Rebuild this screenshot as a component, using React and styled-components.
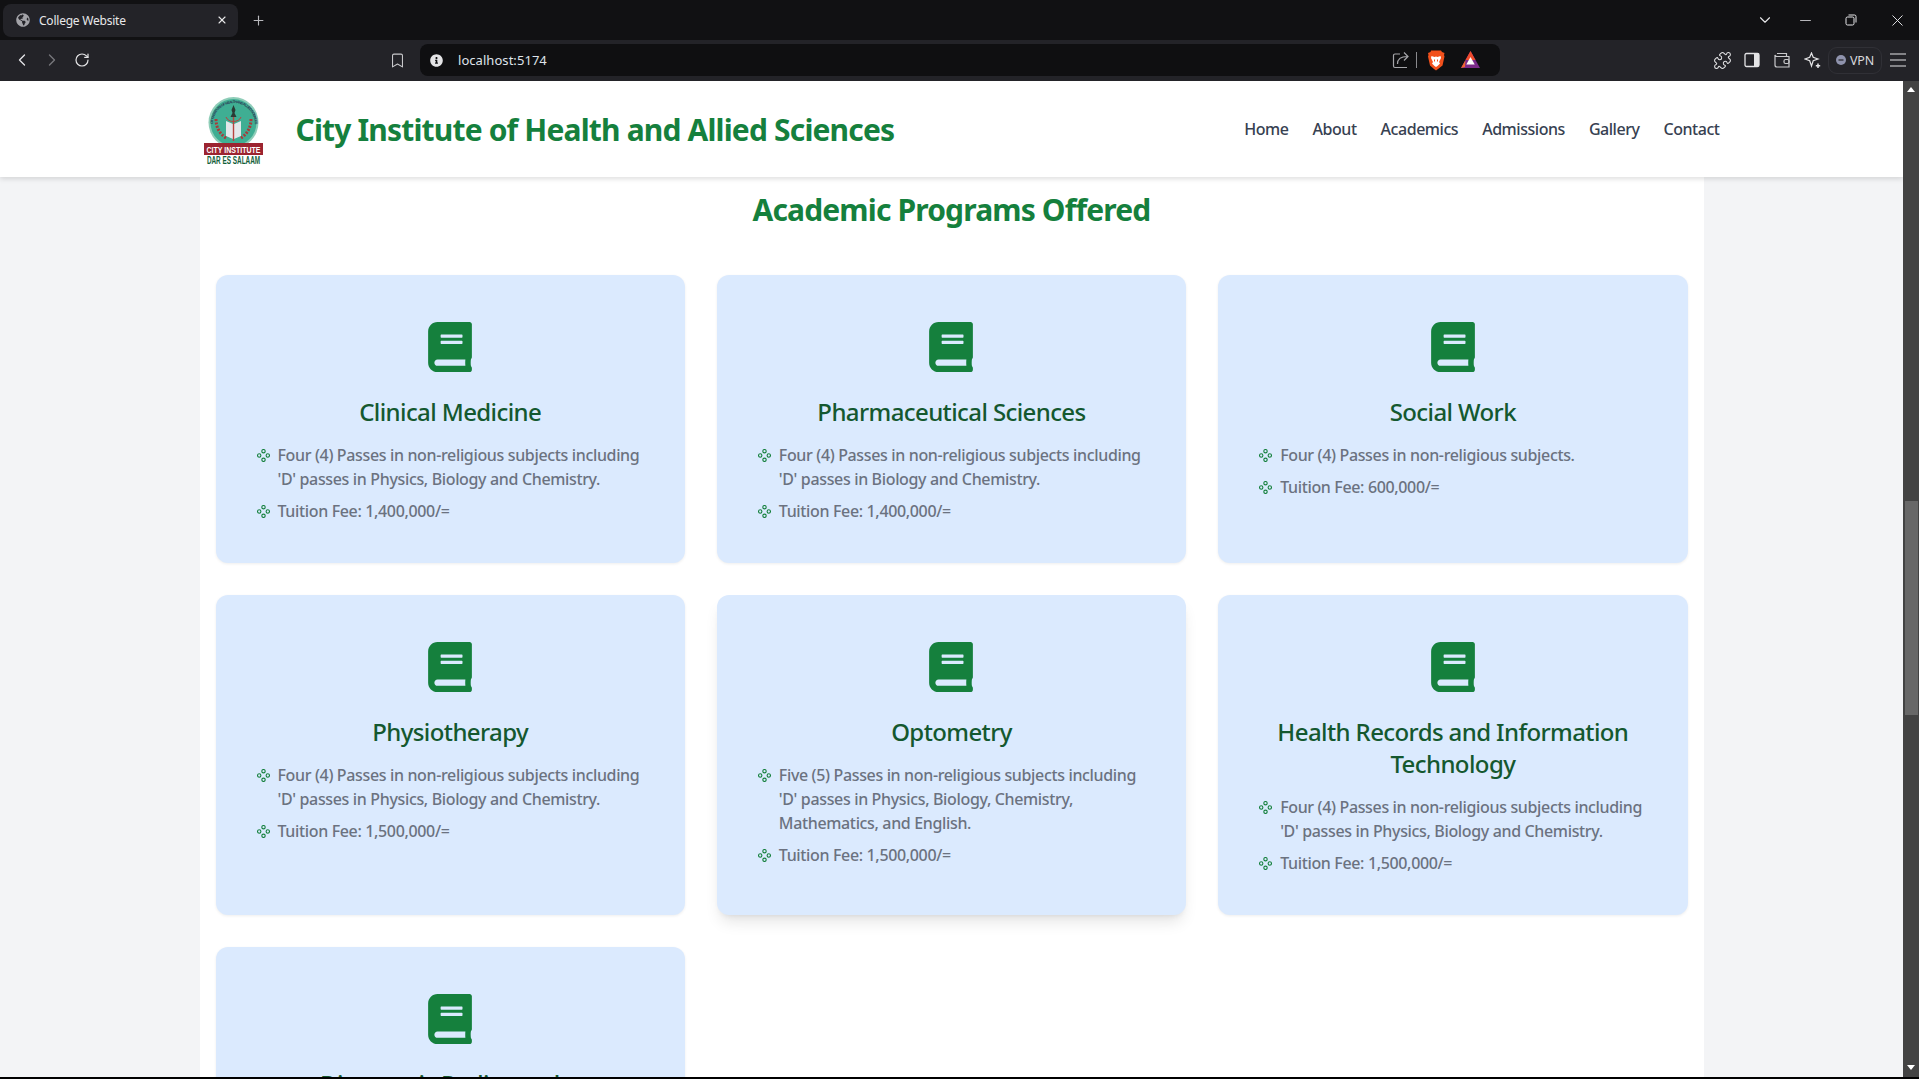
import styled, { createGlobalStyle } from 'styled-components';
import { ChevronLeft, ChevronRight, ChevronDown, RotateCw, Bookmark, X, Plus, Minus, Puzzle } from 'lucide-react';
import { FaBook, FaGlobeAmericas, FaInfoCircle } from 'react-icons/fa';

const FONT = '"Noto Sans", "Open Sans", sans-serif';

const GlobalStyle = createGlobalStyle`
  html, body {
    margin: 0;
    height: 100%;
    overflow: hidden;
    font-family: ${FONT};
  }
`;

const Screen = styled.div`
  display: flex;
  flex-direction: column;
  height: 1079px;
  background: #000;
`;

/* browser chrome */
const TabStrip = styled.div`
  display: flex;
  align-items: center;
  flex: 0 0 40px;
  background: #111113;
  color: #e6e6e8;
`;
const Tab = styled.div`
  display: flex;
  align-items: center;
  width: 235px;
  height: 33px;
  margin-left: 3px;
  padding: 0 10px 0 13px;
  box-sizing: border-box;
  border-radius: 8px;
  background: #232328;
  font-size: 12px;
  letter-spacing: -0.22px;
  color: #e8e8ea;
  svg { flex-shrink: 0; }
  span { flex: 1; margin-left: 9px; }
`;
const NewTab = styled.div`
  display: flex;
  margin-left: 13px;
  color: #b9b9bd;
`;
const WindowControls = styled.div`
  display: flex;
  align-items: center;
  margin-left: auto;
  margin-right: -1px;
  color: #e8e8ea;
`;
const WindowButton = styled.div`
  display: flex;
  align-items: center;
  justify-content: center;
  width: ${p => p.$width || 46}px;
  height: 30px;
`;
const Toolbar = styled.div`
  display: flex;
  align-items: center;
  flex: 0 0 41px;
  padding: 0 6px 1px 7px;
  box-sizing: border-box;
  background: #232328;
  color: #e4e4e6;
`;
const Slot = styled.div`
  display: flex;
  align-items: center;
  justify-content: center;
  width: 30px;
  height: 30px;
  color: ${p => (p.$dim ? '#77777c' : '#e4e4e6')};
`;
const BookmarkSlot = styled(Slot)`
  margin-left: 285px;
  color: #c9c9cc;
`;
const AddressBar = styled.div`
  display: flex;
  align-items: center;
  width: 1080px;
  height: 32px;
  margin-left: 8px;
  padding: 0 20px 0 10px;
  box-sizing: border-box;
  border-radius: 8px;
  background: #0f0f11;
  font-size: 13px;
  letter-spacing: 0.05px;
  color: #dfe3ea;
`;
const Url = styled.span`
  margin-left: 15px;
  flex: 1;
`;
const BarDivider = styled.div`
  width: 1px;
  height: 16px;
  margin: 0 10px 0 6px;
  background: #8a8a8e;
`;
const IconSpacer = styled.div`
  width: 16px;
`;
const Extensions = styled.div`
  display: flex;
  align-items: center;
  margin-left: auto;
`;
const VpnPill = styled.div`
  display: flex;
  align-items: center;
  gap: 4px;
  width: 54px;
  height: 27px;
  margin: 0 1px;
  padding-left: 7px;
  box-sizing: border-box;
  border: 1px solid #303036;
  border-radius: 9px;
  font-size: 12.5px;
  letter-spacing: -0.2px;
  color: #d8d8dc;
`;

/* viewport */
const Viewport = styled.div`
  display: flex;
  flex: 1;
  min-height: 0;
  margin-bottom: 2px;
`;
const Page = styled.div`
  flex: 1;
  min-width: 0;
  overflow: hidden;
  background: #f3f4f6;
`;
const Scrollbar = styled.div`
  position: relative;
  flex: 0 0 16px;
  background: #434343;
`;
const ScrollThumb = styled.div`
  position: absolute;
  left: 2px;
  right: 1px;
  top: 420px;
  height: 214px;
  background: #686868;
`;
const ScrollArrow = styled.div`
  position: absolute;
  left: 4px;
  ${p => (p.$down ? 'bottom: 7px;' : 'top: 6px;')}
  width: 0;
  height: 0;
  border-left: 4px solid transparent;
  border-right: 4px solid transparent;
  ${p => (p.$down ? 'border-top: 5px solid #fff;' : 'border-bottom: 5px solid #fff;')}
`;

/* site header */
const SiteHeader = styled.header`
  position: relative;
  z-index: 2;
  height: 96px;
  background: #fff;
  box-shadow: 0 2px 5px rgba(0, 0, 0, 0.13);
`;
const HeaderInner = styled.div`
  display: flex;
  align-items: center;
  height: 100%;
  width: 1536px;
  margin: 0 auto;
  padding-left: 20px;
  box-sizing: border-box;
`;
const LogoMark = styled.svg`
  flex-shrink: 0;
  margin-top: 3px;
`;
const SiteTitle = styled.h1`
  margin: 2px 0 0 32px;
  font-size: 30px;
  font-weight: 700;
  line-height: 36px;
  letter-spacing: -0.83px;
  color: #15803d;
`;
const Nav = styled.nav`
  display: flex;
  gap: 24px;
  margin-left: auto;
`;
const NavLink = styled.a`
  font-size: 16px;
  font-weight: 500;
  letter-spacing: -0.46px;
  color: #374151;
`;

/* programs */
const Main = styled.main`
  width: 1504px;
  margin: 0 auto;
  padding: 15px 16px 0;
  box-sizing: border-box;
  background: #fff;
`;
const SectionTitle = styled.h2`
  margin: 0 0 47px;
  text-align: center;
  font-size: 30px;
  font-weight: 700;
  line-height: 36px;
  letter-spacing: -0.85px;
  color: #15803d;
`;
const Grid = styled.div`
  display: grid;
  grid-template-columns: repeat(3, 1fr);
  gap: 32px;
`;
const Card = styled.article`
  padding: 47px 40px 40px;
  border-radius: 12px;
  background: #dbeafe;
  box-shadow: ${p => (p.$raised
    ? '0 10px 15px -3px rgba(0,0,0,.1), 0 4px 6px -4px rgba(0,0,0,.1)'
    : '0 1px 3px rgba(0,0,0,.07)')};
`;
const CardIcon = styled.div`
  display: flex;
  justify-content: center;
  height: 50px;
  margin-bottom: 24px;
  color: #15803d;
`;
const CardTitle = styled.h3`
  margin: 0 0 15px;
  text-align: center;
  font-size: 24px;
  font-weight: 500;
  line-height: 32px;
  letter-spacing: -0.6px;
  color: #14582f;
`;
const Reqs = styled.ul`
  display: flex;
  flex-direction: column;
  gap: 8px;
  margin: 0;
  padding: 0;
  list-style: none;
`;
const Req = styled.li`
  display: flex;
  font-size: 16px;
  font-weight: 500;
  line-height: 24px;
  letter-spacing: -0.35px;
  color: #6b7280;
`;
const BulletMark = styled.svg`
  flex: 0 0 13px;
  width: 13px;
  height: 13px;
  margin: 6px 8px 0 1px;
  color: #15803d;
`;

function Bullet() {
  return (
    <BulletMark viewBox="0 0 13 13" fill="none" stroke="currentColor" strokeWidth="1.1">
      <circle cx="6.5" cy="2.2" r="1.7" />
      <circle cx="6.5" cy="10.8" r="1.7" />
      <circle cx="2.2" cy="6.5" r="1.7" />
      <circle cx="10.8" cy="6.5" r="1.7" />
    </BulletMark>
  );
}

function Logo() {
  return (
    <LogoMark width="60" height="68" viewBox="0 0 60 68">
      <defs>
        <path id="ringText" d="M9 27a21 21 0 1 1 42 0" />
      </defs>
      <ellipse cx="29.5" cy="25.5" rx="25" ry="25.5" fill="#8fcdb8" />
      <ellipse cx="29.5" cy="25.5" rx="23" ry="23.5" fill="#3fae93" />
      <text fontFamily="Liberation Sans, sans-serif" fontSize="3.6" fontWeight="700" fill="#2b3a55">
        <textPath href="#ringText" textLength="66">CITY INSTITUTE OF HEALTH AND ALLIED SCIENCES</textPath>
      </text>
      <path d="M12 22c0 9 4 15 10 19M47 22c0 9-4 15-10 19" fill="none" stroke="#a83a3a" strokeWidth="3" strokeDasharray="2 1.4" />
      <path d="M22 24l7 3v15l-7-3zM37 24l-7 3v15l7-3z" fill="#e4e7ea" />
      <path d="M29.5 8l2 5-1 3 2 4h-6l2-4-1-3z" fill="#2a3a35" />
      <path d="M29.5 20v24" stroke="#b8433f" strokeWidth="1.4" />
      <path d="M22 20c2 6 13 6 15 0" fill="none" stroke="#b8433f" strokeWidth="1" />
      <rect x="0" y="46" width="59" height="12" fill="#9c2430" />
      <text transform="translate(29.5 55.5) scale(0.74 1)" textAnchor="middle"
        fontFamily="Liberation Sans, sans-serif" fontSize="9.500" fontWeight="700" fill="#fff">CITY INSTITUTE</text>
      <text transform="translate(29.5 67) scale(0.64 1)" textAnchor="middle"
        fontFamily="Liberation Sans, sans-serif" fontSize="10" fontWeight="700" fill="#14603a">DAR ES SALAAM</text>
    </LogoMark>
  );
}

function RestoreIcon() {
  return (
    <svg width="12" height="12" viewBox="0 0 12 12" fill="none" stroke="currentColor" strokeWidth="1">
      <rect x="1" y="3" width="8" height="8" rx="1.5" />
      <path d="M3.5 1h6A1.5 1.5 0 0 1 11 2.500v6" />
    </svg>
  );
}

function ShareIcon() {
  return (
    <svg width="18" height="18" viewBox="0 0 18 18" fill="none" stroke="#a6a6aa" strokeWidth="1.2">
      <path d="M8 3H3a1.500 1.500 0 0 0-1.500 1.500V15A1.500 1.500 0 0 0 3 16.500h12" />
      <path d="M5.500 13c0-5 3-7.500 10-7.500M12 1.500l4 4-4 4" />
    </svg>
  );
}

function BraveIcon() {
  return (
    <svg width="18" height="21" viewBox="0 0 18 21">
      <path d="M4 0.500h10l1 1.500 2.500 1-0.500 2 0.500 1.500-2 9-4.500 3.500-2 1.500-2-1.500L3 15.500 1 6.500 1.500 5 1 3l2.500-1z" fill="#f1501c" />
      <path d="M4.500 6l3 1 1.500-0.500 1.500 0.500 3-1 0.500 2-2 4 1 1.500-2.500 2.500-1.500 1-1.500-1-2.500-2.500 1-1.500-2-4z" fill="#fff" />
      <path d="M7.500 9.500v2M10.500 9.500v2" stroke="#f1501c" strokeWidth="1" />
    </svg>
  );
}

function BatIcon() {
  return (
    <svg width="19" height="18" viewBox="0 0 19 18">
      <path d="M9.500 0L19 17H0z" fill="#7b2a8a" />
      <path d="M9.500 0l5 9h-10z" fill="#ef4b2b" />
      <path d="M4.500 9L0 17l4-1 z" fill="#f0652f" />
      <path d="M9.500 6l4.200 7.500H5.300z" fill="#fff" />
    </svg>
  );
}

function PanelIcon() {
  return (
    <svg width="16" height="16" viewBox="0 0 16 16">
      <rect x="1" y="1.500" width="14" height="13" rx="1.500" fill="none" stroke="#e4e4e6" strokeWidth="1.300" />
      <rect x="10" y="1.500" width="5" height="13" fill="#e4e4e6" />
    </svg>
  );
}

function WalletIcon() {
  return (
    <svg width="16" height="16" viewBox="0 0 16 16" fill="none" stroke="#c9c9cc" strokeWidth="1.200">
      <path d="M3 1.500h9.500V4M15 4.500H3A2 2 0 0 1 1 3v10a2 2 0 0 0 2 2h12z" />
      <rect x="10" y="7.500" width="5" height="4" rx="1.500" />
    </svg>
  );
}

function SparkIcon() {
  return (
    <svg width="17" height="17" viewBox="0 0 17 17" fill="none" stroke="#e4e4e6" strokeWidth="1.200">
      <path d="M7.500 1l1.700 4.300 4.800 1.700-4.800 1.800L7.500 14 5.700 8.800 1 7l4.700-1.700z" />
      <path d="M14 11.500v4.500M11.800 13.800h4.400" strokeWidth="1.500" />
    </svg>
  );
}

function MenuIcon() {
  return (
    <svg width="16" height="14" viewBox="0 0 16 14" stroke="#e4e4e6" strokeWidth="1.200">
      <path d="M0 1h16M0 7h16M0 13h16" />
    </svg>
  );
}

function VpnDot() {
  return (
    <svg width="10" height="10" viewBox="0 0 10 10">
      <circle cx="5" cy="5" r="5" fill="#8f93ad" />
      <path d="M2.500 5h5" stroke="#232328" strokeWidth="1.200" />
    </svg>
  );
}

const programs = [
  {
    title: 'Clinical Medicine',
    reqs: ["Four (4) Passes in non-religious subjects including 'D' passes in Physics, Biology and Chemistry.", 'Tuition Fee: 1,400,000/='],
  },
  {
    title: 'Pharmaceutical Sciences',
    reqs: ["Four (4) Passes in non-religious subjects including 'D' passes in Biology and Chemistry.", 'Tuition Fee: 1,400,000/='],
  },
  {
    title: 'Social Work',
    reqs: ['Four (4) Passes in non-religious subjects.', 'Tuition Fee: 600,000/='],
  },
  {
    title: 'Physiotherapy',
    reqs: ["Four (4) Passes in non-religious subjects including 'D' passes in Physics, Biology and Chemistry.", 'Tuition Fee: 1,500,000/='],
  },
  {
    title: 'Optometry',
    raised: true,
    reqs: ["Five (5) Passes in non-religious subjects including 'D' passes in Physics, Biology, Chemistry, Mathematics, and English.", 'Tuition Fee: 1,500,000/='],
  },
  {
    title: 'Health Records and Information Technology',
    reqs: ["Four (4) Passes in non-religious subjects including 'D' passes in Physics, Biology and Chemistry.", 'Tuition Fee: 1,500,000/='],
  },
  {
    title: 'Diagnostic Radiography',
    reqs: [],
  },
];

const links = ['Home', 'About', 'Academics', 'Admissions', 'Gallery', 'Contact'];

export default function App() {
  return (
    <Screen>
      <GlobalStyle />
      <TabStrip>
        <Tab>
          <FaGlobeAmericas size={14} color="#a3a3a8" />
          <span>College Website</span>
          <X size={12} strokeWidth={2.2} />
        </Tab>
        <NewTab><Plus size={15} strokeWidth={1.8} /></NewTab>
        <WindowControls>
          <WindowButton $width={34}><ChevronDown size={18} strokeWidth={1.5} /></WindowButton>
          <WindowButton><Minus size={17} strokeWidth={1.1} /></WindowButton>
          <WindowButton><RestoreIcon /></WindowButton>
          <WindowButton><X size={19} strokeWidth={1.2} /></WindowButton>
        </WindowControls>
      </TabStrip>
      <Toolbar>
        <Slot><ChevronLeft size={20} strokeWidth={1.6} /></Slot>
        <Slot $dim><ChevronRight size={20} strokeWidth={1.6} /></Slot>
        <Slot><RotateCw size={16} strokeWidth={1.8} /></Slot>
        <BookmarkSlot><Bookmark size={17} strokeWidth={1.5} /></BookmarkSlot>
        <AddressBar>
          <FaInfoCircle size={13} color="#e4e4e6" />
          <Url>localhost:5174</Url>
          <ShareIcon />
          <BarDivider />
          <BraveIcon />
          <IconSpacer />
          <BatIcon />
        </AddressBar>
        <Extensions>
          <Slot><Puzzle size={19} strokeWidth={1.3} /></Slot>
          <Slot><PanelIcon /></Slot>
          <Slot><WalletIcon /></Slot>
          <Slot><SparkIcon /></Slot>
          <VpnPill><VpnDot />VPN</VpnPill>
          <Slot><MenuIcon /></Slot>
        </Extensions>
      </Toolbar>
      <Viewport>
        <Page>
          <SiteHeader>
            <HeaderInner>
              <Logo />
              <SiteTitle>City Institute of Health and Allied Sciences</SiteTitle>
              <Nav>
                {links.map(l => <NavLink key={l}>{l}</NavLink>)}
              </Nav>
            </HeaderInner>
          </SiteHeader>
          <Main>
            <SectionTitle>Academic Programs Offered</SectionTitle>
            <Grid>
              {programs.map(p => (
                <Card key={p.title} $raised={p.raised}>
                  <CardIcon><FaBook size={50} /></CardIcon>
                  <CardTitle>{p.title}</CardTitle>
                  <Reqs>
                    {p.reqs.map(r => (
                      <Req key={r}><Bullet /><span>{r}</span></Req>
                    ))}
                  </Reqs>
                </Card>
              ))}
            </Grid>
          </Main>
        </Page>
        <Scrollbar>
          <ScrollArrow />
          <ScrollThumb />
          <ScrollArrow $down />
        </Scrollbar>
      </Viewport>
    </Screen>
  );
}
